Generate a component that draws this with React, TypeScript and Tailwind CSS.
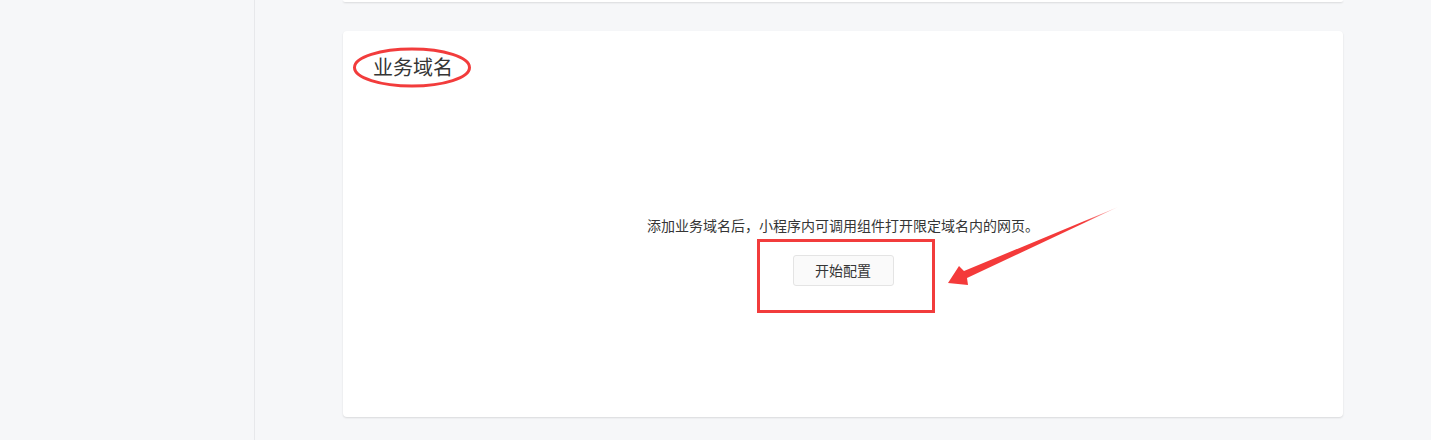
import React from "react";

const font = { fontFamily: '"Noto Sans CJK SC", "Noto Sans", sans-serif' };

function Annotations() {
  // red marks drawn over the page (screenshot annotations)
  return (
    <svg
      className="pointer-events-none absolute left-0 top-0"
      width="1431"
      height="440"
      viewBox="0 0 1431 440"
    >
      <defs>
        <linearGradient id="tail" x1="948" y1="283" x2="1118" y2="207" gradientUnits="userSpaceOnUse">
          <stop offset="0" stopColor="#f43a3a" />
          <stop offset="0.8" stopColor="#f43a3a" />
          <stop offset="1" stopColor="#f43a3a" stopOpacity="0.2" />
        </linearGradient>
      </defs>
      <ellipse cx="412" cy="67.5" rx="57.5" ry="18.5" fill="none" stroke="#f23c3c" strokeWidth="3" />
      <rect x="758.5" y="240.5" width="175" height="71" fill="none" stroke="#f23c3c" strokeWidth="3" />
      <polygon
        points="948,283 959,266 964,271 1118,207 967,278 968,285"
        fill="url(#tail)"
      />
    </svg>
  );
}

export default function App() {
  return (
    <div className="relative flex h-[440px] overflow-hidden bg-[#f6f7f9]" style={font}>
      {/* sidebar */}
      <div className="w-[255px] shrink-0 border-r border-[#e7e8eb] bg-[#f6f7f9]" />

      {/* main */}
      <div className="flex-1">
        <div className="mx-auto w-[1000px]">
          <div className="h-[2px] rounded-b-[4px] bg-white shadow-[0_1px_2px_0_rgba(0,0,0,0.12)]" />

          <div className="mt-[29px] flex h-[386px] flex-col rounded-[4px] bg-white px-[30px] pt-[22px] shadow-[0_1px_2px_0_rgba(0,0,0,0.12)]">
            <h2 className="text-[20px] font-normal leading-[28px] text-[#353535]">业务域名</h2>

            <div className="mt-[134px] flex flex-col items-center">
              <p className="text-[14px] leading-[20px] text-[#353535]">
                添加业务域名后，小程序内可调用组件打开限定域名内的网页。
              </p>
              <button className="mt-[20px] h-[31px] w-[101px] rounded-[3px] border border-[#e4e4e4] bg-[#fafafa] text-[14px] text-[#353535]">
                开始配置
              </button>
            </div>
          </div>
        </div>
      </div>

      <Annotations />
    </div>
  );
}
